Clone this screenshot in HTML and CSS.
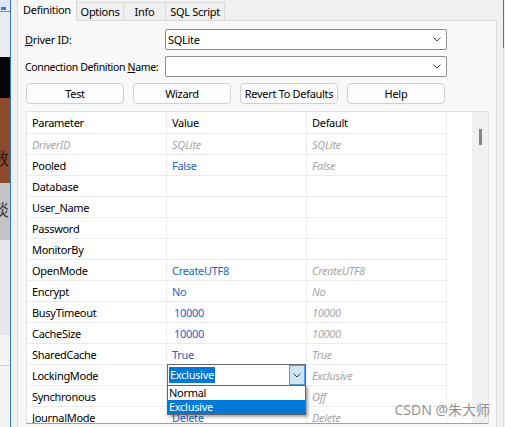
FILE: index.html
```html
<!DOCTYPE html>
<html lang="en">

<head>
    <meta charset="UTF-8">
    <title>FireDAC Connection Editor</title>
    <link rel="stylesheet" href="styles.css">
</head>

<body>
    <div class="screen">
        <div class="desk">
            <div class="desk-top"><span class="desk-icon"></span></div>
            <div class="desk-light"></div>
            <div class="desk-black"></div>
            <div class="desk-brown"><span class="desk-glyph">数</span></div>
            <div class="desk-grey"><span class="desk-glyph light">淡</span></div>
            <div class="desk-pale"></div>
            <div class="desk-white"><div class="desk-line"></div></div>
        </div>

        <div class="dialog">
            <div class="tabs">
                <div class="tab active w-def">Definition</div>
                <div class="tab w-opt">Options</div>
                <div class="tab w-info">Info</div>
                <div class="tab w-sql">SQL Script</div>
            </div>

            <div class="page">
                <div class="form-row">
                    <label><u>D</u>river ID:</label>
                    <div class="combo">
                        <span>SQLite</span>
                        <svg width="8" height="5" viewBox="0 0 8 5"><path d="M0.5 0.5 L4 4 L7.5 0.5" fill="none" stroke="#505050" stroke-width="1"/></svg>
                    </div>
                </div>
                <div class="form-row">
                    <label class="long">Connection Definition <u>N</u>ame:</label>
                    <div class="combo">
                        <span></span>
                        <svg width="8" height="5" viewBox="0 0 8 5"><path d="M0.5 0.5 L4 4 L7.5 0.5" fill="none" stroke="#505050" stroke-width="1"/></svg>
                    </div>
                </div>

                <div class="buttons">
                    <div class="btn">Test</div>
                    <div class="btn">Wizard</div>
                    <div class="btn">Revert To Defaults</div>
                    <div class="btn">Help</div>
                </div>

                <div class="grid">
                    <div class="cells">
                        <div class="row head">
                            <div class="cell">Parameter</div>
                            <div class="cell">Value</div>
                            <div class="cell">Default</div>
                        </div>
                        <div class="row">
                            <div class="cell dim">DriverID</div>
                            <div class="cell dim">SQLite</div>
                            <div class="cell dim">SQLite</div>
                        </div>
                        <div class="row">
                            <div class="cell">Pooled</div>
                            <div class="cell val">False</div>
                            <div class="cell dim">False</div>
                        </div>
                        <div class="row">
                            <div class="cell">Database</div>
                            <div class="cell val"></div>
                            <div class="cell dim"></div>
                        </div>
                        <div class="row">
                            <div class="cell">User_Name</div>
                            <div class="cell val"></div>
                            <div class="cell dim"></div>
                        </div>
                        <div class="row">
                            <div class="cell">Password</div>
                            <div class="cell val"></div>
                            <div class="cell dim"></div>
                        </div>
                        <div class="row">
                            <div class="cell">MonitorBy</div>
                            <div class="cell val"></div>
                            <div class="cell dim"></div>
                        </div>
                        <div class="row">
                            <div class="cell">OpenMode</div>
                            <div class="cell val">CreateUTF8</div>
                            <div class="cell dim">CreateUTF8</div>
                        </div>
                        <div class="row">
                            <div class="cell">Encrypt</div>
                            <div class="cell val">No</div>
                            <div class="cell dim">No</div>
                        </div>
                        <div class="row">
                            <div class="cell">BusyTimeout</div>
                            <div class="cell val num">10000</div>
                            <div class="cell dim">10000</div>
                        </div>
                        <div class="row">
                            <div class="cell">CacheSize</div>
                            <div class="cell val num">10000</div>
                            <div class="cell dim">10000</div>
                        </div>
                        <div class="row">
                            <div class="cell">SharedCache</div>
                            <div class="cell val">True</div>
                            <div class="cell dim">True</div>
                        </div>
                        <div class="row">
                            <div class="cell">LockingMode</div>
                            <div class="cell val editing">
                                <div class="editor">
                                    <span class="sel">Exclusive</span>
                                    <span class="drop-btn">
                                        <svg width="8" height="5" viewBox="0 0 8 5"><path d="M0.5 0.5 L4 4 L7.5 0.5" fill="none" stroke="#404040" stroke-width="1"/></svg>
                                    </span>
                                </div>
                                <div class="list">
                                    <div class="item">Normal</div>
                                    <div class="item picked">Exclusive</div>
                                </div>
                            </div>
                            <div class="cell dim">Exclusive</div>
                        </div>
                        <div class="row">
                            <div class="cell">Synchronous</div>
                            <div class="cell val"></div>
                            <div class="cell dim">Off</div>
                        </div>
                        <div class="row">
                            <div class="cell">JournalMode</div>
                            <div class="cell val">Delete</div>
                            <div class="cell dim">Delete</div>
                        </div>
                    </div>
                    <div class="blank"></div>
                    <div class="vscroll"><div class="thumb"></div></div>
                </div>

                <div class="watermark">CSDN @朱大师</div>
            </div>
        </div>

        <div class="edge">
            <div class="edge-top"></div>
            <div class="edge-rest"></div>
        </div>
    </div>
</body>

</html>
```

FILE: styles.css
```css
body {
    margin: 0;
    font-family: "Noto Sans", "Noto Sans CJK SC", sans-serif;
    font-size: 11px;
    letter-spacing: -0.3px;
    color: #000;
    background-color: #f0f0f0;
    overflow: hidden;
}

.screen {
    display: flex;
    width: 505px;
    height: 427px;
    overflow: hidden;
}

/* desktop strip peeking on the left */
.desk {
    width: 10px;
    flex: none;
    display: flex;
    flex-direction: column;
    overflow: hidden;
    border-right: 1px solid #2a7ad8;
}

.desk-top {
    height: 11px;
    background-color: #dde8f4;
    border-bottom: 1px solid #5a92d6;
}

.desk-icon {
    display: block;
    width: 5px;
    height: 3px;
    margin: 7px 0 0 1px;
    background-color: #3a7bd5;
}

.desk-light {
    height: 45px;
    background-color: #e8ecf0;
}

.desk-black {
    height: 41px;
    background-color: #060606;
}

.desk-brown {
    height: 85px;
    background-color: #8d4b2d;
    overflow: hidden;
}

.desk-grey {
    height: 57px;
    background-color: #c4c4c4;
    overflow: hidden;
}

.desk-glyph {
    display: block;
    font-family: "Noto Sans CJK SC", sans-serif;
    font-size: 17px;
    line-height: 20px;
    color: #2b1a12;
    margin: 50px 0 0 -8px;
    white-space: nowrap;
}

.desk-glyph.light {
    color: #3a3a3a;
    margin-top: 16px;
}

.desk-pale {
    height: 95px;
    background-color: #e6e6e6;
}

.desk-white {
    flex: 1;
    background-color: #f4f4f4;
}

.desk-line {
    margin-top: 30px;
    border-top: 1px solid #d2d2d2;
}

.edge {
    flex: 1;
    display: flex;
    flex-direction: column;
    background-color: #f0f0f0;
}

.edge-top {
    height: 48px;
    border-left: 1px solid #2a7ad8;
}

.edge-rest {
    flex: 1;
    border-left: 1px solid #dcdcdc;
}

/* dialog */
.dialog {
    width: 492px;
    flex: none;
    box-sizing: border-box;
    padding: 0 6px;
}

.tabs {
    display: flex;
    align-items: flex-end;
    height: 20px;
}

.tab {
    box-sizing: border-box;
    height: 18px;
    line-height: 18px;
    text-align: center;
    border: 1px solid #d9d9d9;
    border-left: none;
    border-bottom: none;
    background-color: #f0f0f0;
}

.tab.active {
    height: 21px;
    line-height: 20px;
    margin-bottom: -1px;
    border-top: none;
    border-left: 1px solid #d9d9d9;
    background-color: #f9f9f9;
    position: relative;
    z-index: 1;
}

.w-def { width: 60px; }
.w-opt { width: 47px; }
.w-info { width: 42px; }
.w-sql { width: 59px; }

.page {
    position: relative;
    width: 480px;
    height: 408px;
    box-sizing: border-box;
    border: 1px solid #d9d9d9;
    background-color: #f9f9f9;
    padding: 8px 0 0 7px;
}

.form-row {
    display: flex;
    align-items: center;
    height: 21px;
    margin-bottom: 6px;
}

.form-row label {
    width: 140px;
    flex: none;
    white-space: nowrap;
}

.form-row label.long {
    font-size: 10.5px;
    letter-spacing: -0.35px;
}

.combo {
    width: 282px;
    height: 21px;
    box-sizing: border-box;
    border: 1px solid #8c8c8c;
    border-radius: 2px;
    background-color: #fff;
    display: flex;
    align-items: center;
    justify-content: space-between;
    padding: 0 5px 0 2px;
}

.buttons {
    display: flex;
    gap: 9px;
    margin: 1px 0 0 1px;
}

.btn {
    width: 98px;
    height: 21px;
    box-sizing: border-box;
    border: 1px solid #d0d0d0;
    border-radius: 4px;
    background-color: #fdfdfd;
    text-align: center;
    line-height: 20px;
}

/* property grid */
.grid {
    display: flex;
    width: 463px;
    height: 313px;
    box-sizing: border-box;
    margin: 7px 0 0 1px;
    border: 1px solid #e2e2e2;
    border-bottom-color: #a0a0a0;
    background-color: #fff;
    overflow: hidden;
}

.cells {
    width: 420px;
    flex: none;
}

.row {
    display: flex;
    height: 21px;
}

.cell {
    position: relative;
    width: 140px;
    box-sizing: border-box;
    padding: 1px 0 0 5px;
    border-right: 1px solid #ebebeb;
    border-bottom: 1px solid #ebebeb;
    line-height: 19px;
    white-space: nowrap;
}

.row.head {
    height: 22px;
}

.row.head .cell {
    line-height: 20px;
}

.cell.val {
    color: #1b64c9;
}

.cell.num {
    padding-left: 7px;
}

.cell.dim {
    color: #a6a6a6;
    font-style: italic;
}

.blank {
    flex: 1;
}

.vscroll {
    width: 16px;
    flex: none;
    background-color: #f0f0f0;
}

.thumb {
    width: 3px;
    height: 16px;
    margin: 17px 0 0 7px;
    background-color: #858585;
}

/* in-place combo editor */
.editor {
    position: absolute;
    top: -1px;
    left: 0;
    z-index: 2;
    width: 139px;
    height: 22px;
    box-sizing: border-box;
    border: 1px solid #6a6a6a;
    background-color: #fff;
    display: flex;
    justify-content: space-between;
}

.sel {
    margin: 2px 0 0 1px;
    height: 16px;
    line-height: 16px;
    padding: 0 1px;
    background-color: #0078d7;
    color: #fff;
}

.drop-btn {
    width: 16px;
    box-sizing: border-box;
    border: 1px solid #5a9de0;
    background-color: #cde4f7;
    display: flex;
    align-items: center;
    justify-content: center;
}

.list {
    position: absolute;
    top: 20px;
    left: 0;
    z-index: 3;
    width: 139px;
    box-sizing: border-box;
    border: 1px solid #646464;
    background-color: #fff;
    box-shadow: 2px 2px 3px rgba(0, 0, 0, 0.35);
}

.item {
    height: 14px;
    line-height: 14px;
    padding-left: 1px;
    color: #000;
}

.item.picked {
    background-color: #0078d7;
    color: #fff;
}

.watermark {
    position: absolute;
    top: 380px;
    right: 6px;
    font-size: 14px;
    line-height: 18px;
    letter-spacing: 0;
    color: rgba(110, 110, 110, 0.75);
    white-space: nowrap;
}
```
